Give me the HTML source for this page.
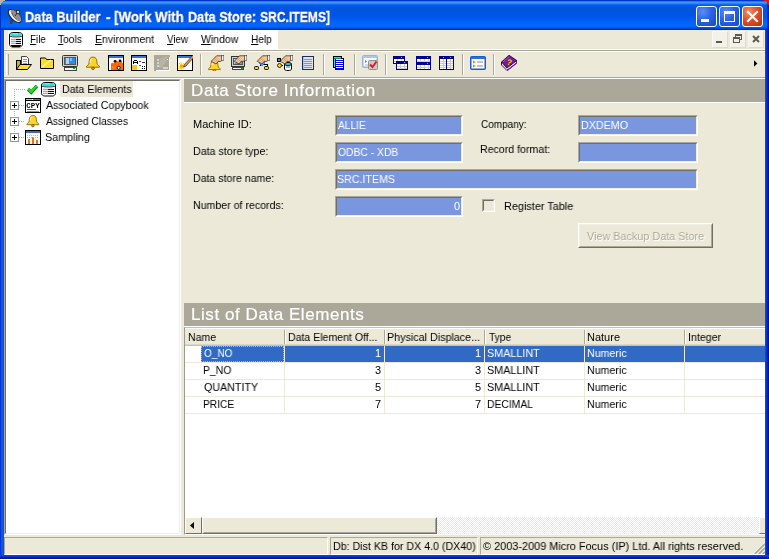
<!DOCTYPE html>
<html>
<head>
<meta charset="utf-8">
<title>Data Builder - [Work With Data Store: SRC.ITEMS]</title>
<style>
html,body{margin:0;padding:0;}
body{width:769px;height:559px;overflow:hidden;background:#ece9d8;font-family:"Liberation Sans",sans-serif;font-size:11px;color:#000;position:relative;}
#win{position:absolute;left:0;top:0;width:769px;height:559px;overflow:hidden;}
#win div,#win svg{position:absolute;box-sizing:border-box;}
.t{will-change:transform;white-space:nowrap;line-height:13px;height:13px;font-size:11px;transform-origin:0 50%;}
.t u{text-decoration:underline;text-underline-offset:1px;}
.tah{font-family:"Liberation Sans",sans-serif;}
.w{color:#fff;}
.ttl{-webkit-text-stroke:0.3px #fff;color:#fff;font-weight:bold;font-size:14px;line-height:17px;height:17px;text-shadow:1px 1px 0 #0f3aa8;}
.hd{-webkit-text-stroke:0.2px #fff;color:#fff;font-size:17px;line-height:19px;height:19px;}
.dis{color:#aca899;text-shadow:1px 1px 0 #fff;}
/* frame */
#title{left:0;top:0;width:769px;height:30px;background:linear-gradient(180deg,#0036c8 0,#0036c8 1px,#2a78ee 1px,#2a78ee 2px,#3f96ff 2px,#3f96ff 3px,#2d84f8 3px,#2d84f8 4px,#1068ec 4px,#1068ec 5px,#065ce2 5px,#0458e0 6.500px,#0055de 8px,#0054e3 14px,#0058eb 18px,#0062f8 21.500px,#0066ff 24px,#0066ff 27px,#0056ea 27px,#0056ea 28px,#0044d4 28px,#0044d4 29px,#0032be 29px,#0032be 30px);}
#frameL{left:0;top:30px;width:4px;height:529px;background:linear-gradient(90deg,#0019cf 0,#0a4be0 1px,#0f5fea 2px,#0055e5 3px,#0050e0 4px);}
#frameR{left:765px;top:30px;width:4px;height:529px;background:linear-gradient(90deg,#0048ea 0,#0048ea 1px,#0034d2 1px,#0034d2 2px,#0022b4 2px,#0022b4 3px,#00128e 3px);}
#frameB{left:0;top:555px;width:769px;height:4px;background:linear-gradient(180deg,#0048ea 0,#0048ea 1px,#0034d2 1px,#0034d2 2px,#0022b4 2px,#0022b4 3px,#00128e 3px);}
.cb{top:6px;width:21px;height:21px;border:1px solid #fff;border-radius:3px;background:radial-gradient(circle at 30% 25%,#5b8ff5 0,#2a62e4 45%,#1747c6 100%);}
#bclose{background:radial-gradient(circle at 30% 25%,#f0906a 0,#dc4f2c 45%,#b9300f 100%);}
.mb{top:31px;width:16px;height:17px;background:#f4f2e8;border:1px solid #f9f8f2;border-right-color:#dedbcb;border-bottom-color:#dedbcb;}
/* menu/toolbar */
#menubg{left:4px;top:30px;width:274px;height:19px;background:#fff;}
.hl{left:4px;width:761px;height:1px;}
.sep{top:54px;width:2px;height:21px;border-left:1px solid #aca899;border-right:1px solid #fff;}
.ic{top:55px;width:16px;height:16px;will-change:transform;}
/* tree */
#tree{left:4px;top:79px;width:177px;height:456px;background:#fff;border:1px solid;border-color:#aca899 #fff #fff #aca899;}
#treein{left:0;top:0;width:175px;height:454px;border:1px solid;border-color:#716f64 #f1efe2 #f1efe2 #716f64;}
.pm{left:10px;width:9px;height:9px;border:1px solid #919b9c;background:#fff;}
.pm:before{content:"";position:absolute;left:1px;top:3px;width:5px;height:1px;background:#000;}
.pm:after{content:"";position:absolute;left:3px;top:1px;width:1px;height:5px;background:#000;}
.dv{width:1px;background-image:linear-gradient(180deg,#aca899 1px,transparent 1px);background-size:1px 2px;}
.dh{height:1px;background-image:linear-gradient(90deg,#aca899 1px,transparent 1px);background-size:2px 1px;}
/* right */
.hdr{left:184px;width:581px;height:24px;background:#aca899;border-bottom:1px solid #fff;}
.fld{background:#7a96df;height:21px;border:1px solid;border-color:#aca899 #fff #fff #aca899;}
.fld:before{content:"";position:absolute;left:0;top:0;right:0;bottom:0;border:1px solid;border-color:#716f64 #f1efe2 #f1efe2 #716f64;}
/* list */
#list{overflow:hidden;left:184px;top:327px;width:581px;height:208px;background:#fff;border-top:1px solid #c2bfb0;border-left:1px solid #9d9a8b;border-bottom:1px solid #fff;}
.hc{top:0;height:18px;width:100px;background:#ece9d8;border-top:1px solid #fff;border-bottom:1px solid #c5c2b2;box-shadow:inset 0 -1px 0 0 #d9d6c6;}
.hd2{top:2px;width:2px;height:14px;border-left:1px solid #aca899;border-right:1px solid #fff;}
.gl{background:#ece9d8;}
.selrow{background:#316ac5;}
/* status */
.sp{top:537px;height:18px;border:1px solid;border-color:#aca899 #fff #fff #aca899;}
</style>
</head>
<body>
<div id="win">
  <div id="title"></div>
  <div style="left:0;top:3px;width:1px;height:27px;background:#0033c8"></div><div style="left:767px;top:3px;width:2px;height:27px;background:linear-gradient(90deg,rgba(0,40,180,.55),rgba(0,20,150,.9))"></div><div id="frameL"></div><div id="frameR"></div><div id="frameB"></div>
  <!-- corners -->
  <svg style="left:0;top:0" width="6" height="6" viewBox="0 0 6 6" shape-rendering="crispEdges"><path d="M0 0h5v1h-2v1h-1v1h-1v2h-1z" fill="#b9b59f"/></svg>
  <svg style="left:763px;top:0" width="6" height="6" viewBox="0 0 6 6" shape-rendering="crispEdges"><path d="M6 0h-5v1h2v1h1v1h1v2h1z" fill="#e81212"/></svg>
  <!-- title icon: satellite dish -->
  <svg style="left:7px;top:7px" width="18" height="18" viewBox="0 0 18 18">
    <path d="M3 12.500h2.500v4.500h-2.500z" fill="#4a3a2a"/>
    <ellipse cx="7.800" cy="9" rx="8.300" ry="4" transform="rotate(45 7.800 9)" fill="#f0f0f0" stroke="#1a1a1a" stroke-width="1"/>
    <ellipse cx="8.800" cy="8" rx="6.800" ry="2.700" transform="rotate(45 8.800 8)" fill="#8e8e8e"/>
    <path d="M8 9L10.500 5.500" stroke="#333" stroke-width="1"/><rect x="9.500" y="3.500" width="3" height="3" fill="#d8d0c0" stroke="#222" stroke-width="0.800"/>
    <path d="M5 6c1 4 4 7 8 8" stroke="#555" stroke-width="0.800" fill="none"/>
  </svg>
  <!-- caption buttons -->
  <div class="cb" style="left:696px"><div style="left:4px;top:12px;width:8px;height:3px;background:#fff"></div></div>
  <div class="cb" style="left:719px"><div style="left:4px;top:4px;width:11px;height:11px;border:1px solid #fff;border-top-width:3px"></div></div>
  <div class="cb" id="bclose" style="left:742px"><svg style="left:3px;top:3px" width="13" height="13" viewBox="0 0 13 13"><path d="M2 2l9 9M11 2l-9 9" stroke="#fff" stroke-width="2.2" stroke-linecap="square"/></svg></div>

  <!-- menu bar -->
  <div id="menubg"></div>
  <div style="left:4px;top:30px;width:20px;height:19px;background:#f1ecd9"></div><div style="left:8px;top:31px;width:16px;height:17px;background:#fff"></div>
  <svg class="ic" style="left:8px;top:32px" width="16" height="16" viewBox="0 0 16 16" shape-rendering="crispEdges"><g shape-rendering="auto"><path d="M1.500 3v9.500c0 1.200 1.500 2.500 3 2.500h7c1.500 0 3-1.300 3-2.500v-9.500c0-1.200-1.500-2.500-3-2.500h-7c-1.500 0-3 1.300-3 2.500z" fill="#fff" stroke="#000"/><path d="M2 2.500c0-.800 1.500-1.500 3-1.500h6c1.500 0 3 .700 3 1.500s-1.500 1.700-3 1.700h-6c-1.500 0-3-.900-3-1.700z" fill="#20e0e0"/><path d="M5 1.800h5" stroke="#a0ffff" stroke-width="0.800"/><path d="M2 4.200c2 1 10 1 12 0" stroke="#000" stroke-width="0.800" fill="none"/></g><path d="M3 7.500h5M3 9.500h5M3 11.500h5" stroke="#aaa"/><path d="M8 7.500h5M8 9.500h5M8 11.500h5" stroke="#111"/><path d="M3 6.500h10M3 8.500h10M3 10.500h10" stroke="#e8e8e8"/><path d="M3 13.500h10M4 14.500h8" stroke="#000"/></svg>
  <div class="mb" style="left:712px"><div style="left:3px;top:9px;width:6px;height:2px;background:#5c5a4f"></div></div>
  <div class="mb" style="left:730px"><div style="left:4px;top:2px;width:7px;height:6px;border:1px solid #5c5a4f;border-top-width:2px"></div><div style="left:2px;top:5px;width:7px;height:6px;border:1px solid #5c5a4f;border-top-width:2px;background:#f4f2e8"></div></div>
  <div class="mb" style="left:748px"><svg style="left:3px;top:3px" width="8" height="8" viewBox="0 0 8 8"><path d="M1 1l6 6M7 1l-6 6" stroke="#5c5a4f" stroke-width="2"/></svg></div>
  <div class="hl" style="top:49px;background:#fff"></div>
  <div class="hl" style="top:50px;background:#aca899"></div>
  <div class="hl" style="top:51px;background:#fff"></div>
  <div class="hl" style="top:77px;background:#aca899"></div>
  <div class="hl" style="top:78px;background:#fff"></div>

  <!-- toolbar -->
  <div style="left:6px;top:54px;width:3px;height:21px;border-left:1px solid #fff;border-right:1px solid #aca899"></div>
  <div class="sep" style="left:200px"></div><div class="sep" style="left:323px"></div><div class="sep" style="left:354px"></div>
  <div class="sep" style="left:385px"></div><div class="sep" style="left:462px"></div><div class="sep" style="left:493px"></div>
  <svg style="left:754px;top:60px" width="4" height="7" viewBox="0 0 4 7"><path d="M0 0.300l3.400 3.200-3.400 3.200z" fill="#000"/></svg>
  <svg class="ic" style="left:16px;top:55px" width="16" height="16" viewBox="0 0 16 16" shape-rendering="crispEdges"><path d="M5.500 1.500h5l2 2v6h-7z" fill="#fff" stroke="#444" shape-rendering="auto"/><path d="M7 4h4M7 6h4M7 8h4" stroke="#999"/><path d="M0.500 5.500h4v9h-4z" fill="#d8b000" stroke="#000"/><path d="M0.500 14.500l3.500-5h11.500l-4 5z" fill="#ffe030" stroke="#000" shape-rendering="auto"/></svg>
<svg class="ic" style="left:39px;top:55px" width="16" height="16" viewBox="0 0 16 16" shape-rendering="crispEdges"><path d="M1.500 4.500v-1.500h5l1 1.500h7v9h-13z" fill="#f8dc28" stroke="#000" shape-rendering="auto"/><path d="M3 12l9-7" stroke="#fff4a0" stroke-width="1.500" shape-rendering="auto"/></svg>
<svg class="ic" style="left:62px;top:55px" width="16" height="16" viewBox="0 0 16 16" shape-rendering="crispEdges"><rect x="0.500" y="0.500" width="15" height="11" rx="1" fill="#d0d0d0" stroke="#333" shape-rendering="auto"/><rect x="2.500" y="2.500" width="11" height="7" fill="#2c8cf0" stroke="#555"/><rect x="4" y="3" width="3" height="6" fill="#a8d4ff"/><rect x="8" y="3" width="2" height="3" fill="#7cc0ff"/><rect x="2" y="12" width="12" height="3" fill="#f4f4f4" stroke="#444" stroke-width="1"/><rect x="11" y="13" width="2" height="1" fill="#00b000"/></svg>
<svg class="ic" style="left:85px;top:55px" width="16" height="16" viewBox="0 0 16 16" shape-rendering="crispEdges"><g transform="translate(0 1.2) scale(1.0 0.88)" shape-rendering="auto"><path d="M8 1c-2.600 0-3.800 2.200-3.800 5 0 3-1.200 4.500-2.700 5.500v1h13v-1c-1.500-1-2.700-2.500-2.700-5.500 0-2.800-1.200-5-3.800-5z" fill="#ffd42a" stroke="#8a6500" stroke-width="1"/><path d="M6.300 3.200c-.9 1-1.100 2.600-1.100 4.200" stroke="#fff6b0" stroke-width="1.200" fill="none"/><circle cx="8" cy="13.800" r="1.400" fill="#e8a800" stroke="#6a4a00" stroke-width="0.800"/></g></svg>
<svg class="ic" style="left:108px;top:55px" width="16" height="16" viewBox="0 0 16 16" shape-rendering="crispEdges"><rect x="0.500" y="0.500" width="15" height="15" fill="#fff" stroke="#000"/><rect x="1" y="1" width="14" height="2" fill="#3f6fd8"/><g shape-rendering="auto"><path d="M3 15v-5.500c0-2 2-2.500 3-1 .2-3.500 3.500-4 4.200-1.200 1-3 4.300-2.500 4 .500l.800.700v6.500z" fill="#f4690e"/><circle cx="7" cy="6.300" r="1.300" fill="#000"/><circle cx="12" cy="5.800" r="1.300" fill="#000"/><circle cx="10.700" cy="12.800" r="1.500" fill="#fff" stroke="#000" stroke-width="0.900"/><path d="M4 12l2 1" stroke="#ffb060" stroke-width="0.800"/></g></svg>
<svg class="ic" style="left:131px;top:55px" width="16" height="16" viewBox="0 0 16 16" shape-rendering="crispEdges"><rect x="0.500" y="0.500" width="15" height="15" fill="#fff" stroke="#000"/><rect x="1" y="1" width="14" height="2" fill="#3f6fd8"/><path d="M2 9v-3h1v-1h3v1h1v3h-1v-1h-3v1z" fill="#000"/><rect x="3" y="6" width="3" height="1" fill="#fff"/><rect x="8" y="6" width="2" height="1" fill="#e00000"/><rect x="11" y="7" width="3" height="1" fill="#333"/><rect x="8" y="10" width="2" height="1" fill="#00a000"/><rect x="1" y="10" width="5" height="5" fill="#f8c818"/><rect x="11" y="11" width="1" height="1" fill="#000"/><rect x="13" y="11" width="1" height="1" fill="#000"/><rect x="11" y="13" width="1" height="1" fill="#000"/><rect x="13" y="13" width="1" height="1" fill="#000"/></svg>
<svg class="ic" style="left:154px;top:55px" width="16" height="16" viewBox="0 0 16 16" shape-rendering="crispEdges"><rect x="0" y="0" width="16" height="16" fill="#aca899"/><path d="M2 15h13v-13" stroke="#fff" fill="none"/><path d="M3 5h2M3 8h2M3 11h3M8 10l6-6M9 13h5" stroke="#fff" shape-rendering="auto"/><path d="M6 4l7-3v5l-5 6-3 1z" fill="#b8b4a4" shape-rendering="auto"/></svg>
<svg class="ic" style="left:177px;top:55px" width="16" height="16" viewBox="0 0 16 16" shape-rendering="crispEdges"><rect x="0.500" y="0.500" width="15" height="15" fill="#fff" stroke="#000"/><rect x="1" y="1" width="14" height="2" fill="#3f6fd8"/><g shape-rendering="auto"><path d="M1 11l7 1M2 8l5 6M4 7l1 8M7 8l-4 6M1 14l7-4" stroke="#ffd000" stroke-width="1"/><circle cx="4.500" cy="11" r="1.500" fill="#ffa000"/><path d="M15.500 0.500l-8 9-1 2.500 2.500-1 8-9z" fill="#d89858" stroke="#5a3010" stroke-width="0.800"/></g></svg>
<svg class="ic" style="left:208px;top:55px" width="16" height="16" viewBox="0 0 16 16" shape-rendering="crispEdges"><g transform="translate(-0.8 4.68) scale(0.9 0.792)" shape-rendering="auto"><path d="M8 1c-2.600 0-3.800 2.200-3.800 5 0 3-1.200 4.500-2.700 5.500v1h13v-1c-1.500-1-2.700-2.500-2.700-5.500 0-2.800-1.200-5-3.800-5z" fill="#ffd42a" stroke="#8a6500" stroke-width="1"/><path d="M6.300 3.200c-.9 1-1.100 2.600-1.100 4.200" stroke="#fff6b0" stroke-width="1.200" fill="none"/><circle cx="8" cy="13.800" r="1.400" fill="#e8a800" stroke="#6a4a00" stroke-width="0.800"/></g><g shape-rendering="auto"><path d="M8.500 0.800h5.500v4.700l-2 1h-2l-2 2.500-4.800-2.700z" fill="#f6c9a0" stroke="#2a1a0a" stroke-width="0.700"/><path d="M8.300 1.800l-4 4M9.300 2.800l-4 4M10.300 3.800l-3.500 3.500M11.300 4.800l-3 3" stroke="#b07840" stroke-width="0.800" stroke-dasharray="1 1"/><rect x="13.800" y="0.600" width="2" height="4.800" fill="#fff" stroke="#222" stroke-width="0.500"/></g></svg>
<svg class="ic" style="left:231px;top:55px" width="16" height="16" viewBox="0 0 16 16" shape-rendering="crispEdges"><rect x="0.500" y="1.500" width="13" height="10" fill="#d0d0d0" stroke="#333"/><rect x="2.500" y="3.500" width="9" height="6" fill="#c0e4ff" stroke="#555"/><path d="M3 9l3-3 2 2 3-2v3z" fill="#4aa8f0" shape-rendering="auto"/><rect x="1.500" y="12.500" width="11" height="2" fill="#f4f4f4" stroke="#444"/><rect x="10" y="13" width="2" height="1" fill="#00b000"/><g shape-rendering="auto"><path d="M8.500 0.800h5.500v4.700l-2 1h-2l-2 2.500-4.800-2.700z" fill="#f6c9a0" stroke="#2a1a0a" stroke-width="0.700"/><path d="M8.300 1.800l-4 4M9.300 2.800l-4 4M10.300 3.800l-3.500 3.500M11.300 4.800l-3 3" stroke="#b07840" stroke-width="0.800" stroke-dasharray="1 1"/><rect x="13.800" y="0.600" width="2" height="4.800" fill="#fff" stroke="#222" stroke-width="0.500"/></g></svg>
<svg class="ic" style="left:254px;top:55px" width="16" height="16" viewBox="0 0 16 16" shape-rendering="crispEdges"><path d="M6 11v-2h7v2" stroke="#000" fill="none"/><rect x="0.500" y="11.500" width="4" height="3" fill="#ffd000" stroke="#000" shape-rendering="auto" rx="1"/><rect x="10.500" y="11.500" width="4" height="3" fill="#ffd000" stroke="#000" shape-rendering="auto" rx="1"/><path d="M8 5l3 3-3 3-3-3z" fill="#60a8f0" stroke="#2060b0" stroke-width="0.600" shape-rendering="auto"/><g shape-rendering="auto"><path d="M8.500 0.800h5.500v4.700l-2 1h-2l-2 2.500-4.800-2.700z" fill="#f6c9a0" stroke="#2a1a0a" stroke-width="0.700"/><path d="M8.300 1.800l-4 4M9.300 2.800l-4 4M10.300 3.800l-3.500 3.500M11.300 4.800l-3 3" stroke="#b07840" stroke-width="0.800" stroke-dasharray="1 1"/><rect x="13.800" y="0.600" width="2" height="4.800" fill="#fff" stroke="#222" stroke-width="0.500"/></g></svg>
<svg class="ic" style="left:277px;top:55px" width="16" height="16" viewBox="0 0 16 16" shape-rendering="crispEdges"><rect x="0.500" y="3.500" width="3" height="3" fill="#3890f0" stroke="#000"/><circle cx="2.500" cy="10.500" r="2" fill="#ffd800" stroke="#000" stroke-width="0.800" shape-rendering="auto"/><path d="M4 5h3M5 10h2" stroke="#000" stroke-dasharray="1 1"/><g shape-rendering="auto"><path d="M7.500 9v5c0 1 1.500 1.500 3.500 1.500s3.500-.500 3.500-1.500v-5z" fill="#fff" stroke="#000"/><ellipse cx="11" cy="9" rx="3.500" ry="1.500" fill="#30d8e0" stroke="#000"/><path d="M9 12h4" stroke="#666"/></g><g shape-rendering="auto"><path d="M8.500 0.800h5.500v4.700l-2 1h-2l-2 2.500-4.800-2.700z" fill="#f6c9a0" stroke="#2a1a0a" stroke-width="0.700"/><path d="M8.300 1.800l-4 4M9.300 2.800l-4 4M10.300 3.800l-3.500 3.500M11.300 4.800l-3 3" stroke="#b07840" stroke-width="0.800" stroke-dasharray="1 1"/><rect x="13.800" y="0.600" width="2" height="4.800" fill="#fff" stroke="#222" stroke-width="0.500"/></g></svg>
<svg class="ic" style="left:300px;top:55px" width="16" height="16" viewBox="0 0 16 16" shape-rendering="crispEdges"><rect x="2.500" y="1.500" width="11" height="13" fill="#dfe3ee" stroke="#1a2a6a"/><path d="M4 4h8M4 6h8M4 8h8M4 10h8M4 12h8" stroke="#8a92b8"/><rect x="3" y="2" width="1" height="12" fill="#b8bed8"/></svg>
<svg class="ic" style="left:331px;top:55px" width="16" height="16" viewBox="0 0 16 16" shape-rendering="crispEdges"><rect x="2.500" y="1.500" width="8" height="11" fill="#30d8e0" stroke="#000"/><rect x="4.500" y="3.500" width="8" height="11" fill="#fff" stroke="#000"/><path d="M5 5h7M5 7h7M5 9h7M5 11h7M5 13h7" stroke="#0000f0"/><path d="M3 3h7" stroke="#0090a0"/></svg>
<svg class="ic" style="left:362px;top:55px" width="16" height="16" viewBox="0 0 16 16" shape-rendering="crispEdges"><g shape-rendering="auto"><rect x="0.750" y="0.750" width="14.500" height="11.500" rx="1.500" fill="#fff" stroke="#8fb4ec" stroke-width="1.500"/><rect x="1" y="1" width="14" height="2" fill="#a8c8f4"/><path d="M3 5l2 1.500-2 1.500z" fill="#4a80d8"/><path d="M3 10h3" stroke="#9ab8e8"/><rect x="6.500" y="5.500" width="9" height="9" rx="1" fill="#c8c8c8" stroke="#909090"/><path d="M8 9.500l2.500 2.500 4-5.500" stroke="#e01818" stroke-width="1.800" fill="none"/></g></svg>
<svg class="ic" style="left:393px;top:55px" width="16" height="16" viewBox="0 0 16 16" shape-rendering="crispEdges"><rect x="0.5" y="1.5" width="11" height="7" fill="#fff" stroke="#000080"/><rect x="0" y="1" width="12" height="3" fill="#000090"/><rect x="8" y="2" width="1" height="1" fill="#00e0ff"/><rect x="1" y="6" width="10" height="1" fill="#c8c8d8"/><rect x="4" y="4" width="1" height="4" fill="#c8c8d8"/><rect x="8" y="4" width="1" height="4" fill="#c8c8d8"/><rect x="3.5" y="6.5" width="11" height="8" fill="#fff" stroke="#000080"/><rect x="3" y="6" width="12" height="3" fill="#000090"/><rect x="11" y="7" width="1" height="1" fill="#00e0ff"/><rect x="4" y="11" width="10" height="1" fill="#c8c8d8"/><rect x="4" y="13" width="10" height="1" fill="#c8c8d8"/><rect x="7" y="9" width="1" height="5" fill="#c8c8d8"/><rect x="11" y="9" width="1" height="5" fill="#c8c8d8"/></svg>
<svg class="ic" style="left:416px;top:55px" width="16" height="16" viewBox="0 0 16 16" shape-rendering="crispEdges"><rect x="0.5" y="1.5" width="14" height="6" fill="#fff" stroke="#000080"/><rect x="0" y="1" width="15" height="3" fill="#000090"/><rect x="11" y="2" width="1" height="1" fill="#00e0ff"/><rect x="1" y="6" width="13" height="1" fill="#c8c8d8"/><rect x="4" y="4" width="1" height="3" fill="#c8c8d8"/><rect x="8" y="4" width="1" height="3" fill="#c8c8d8"/><rect x="12" y="4" width="1" height="3" fill="#c8c8d8"/><rect x="0.5" y="7.5" width="14" height="7" fill="#fff" stroke="#000080"/><rect x="0" y="7" width="15" height="3" fill="#000090"/><rect x="11" y="8" width="1" height="1" fill="#00e0ff"/><rect x="1" y="12" width="13" height="1" fill="#c8c8d8"/><rect x="4" y="10" width="1" height="4" fill="#c8c8d8"/><rect x="8" y="10" width="1" height="4" fill="#c8c8d8"/><rect x="12" y="10" width="1" height="4" fill="#c8c8d8"/></svg>
<svg class="ic" style="left:439px;top:55px" width="16" height="16" viewBox="0 0 16 16" shape-rendering="crispEdges"><rect x="0.5" y="1.5" width="7" height="13" fill="#fff" stroke="#000080"/><rect x="0" y="1" width="8" height="3" fill="#000090"/><rect x="4" y="2" width="1" height="1" fill="#00e0ff"/><rect x="1" y="6" width="6" height="1" fill="#c8c8d8"/><rect x="1" y="8" width="6" height="1" fill="#c8c8d8"/><rect x="1" y="10" width="6" height="1" fill="#c8c8d8"/><rect x="1" y="12" width="6" height="1" fill="#c8c8d8"/><rect x="4" y="4" width="1" height="10" fill="#c8c8d8"/><rect x="7.5" y="1.5" width="7" height="13" fill="#fff" stroke="#000080"/><rect x="7" y="1" width="8" height="3" fill="#000090"/><rect x="11" y="2" width="1" height="1" fill="#00e0ff"/><rect x="8" y="6" width="6" height="1" fill="#c8c8d8"/><rect x="8" y="8" width="6" height="1" fill="#c8c8d8"/><rect x="8" y="10" width="6" height="1" fill="#c8c8d8"/><rect x="8" y="12" width="6" height="1" fill="#c8c8d8"/><rect x="11" y="4" width="1" height="10" fill="#c8c8d8"/></svg>
<svg class="ic" style="left:470px;top:55px" width="16" height="16" viewBox="0 0 16 16" shape-rendering="crispEdges"><g shape-rendering="auto"><rect x="0.750" y="1.750" width="14.500" height="12.500" rx="1" fill="#fff" stroke="#1c5cd0" stroke-width="1.500"/><rect x="1" y="2" width="14" height="2" fill="#2c6cdc"/><path d="M3 5.500l3 1.500-3 1.500zM3 9.500l3 1.500-3 1.500z" fill="#f08010"/><path d="M7 7h6M7 11h6" stroke="#888"/></g></svg>
<svg class="ic" style="left:501px;top:55px" width="16" height="16" viewBox="0 0 16 16"><g shape-rendering="auto"><path d="M0.500 7v3l5.500 5.500 9.700-7.500v-2.500z" fill="#fff" stroke="#1a0030" stroke-width="0.900"/><path d="M1.500 10.500l4.700 4M1.500 9l4.700 4.500" stroke="#8a6aa0" stroke-width="0.500"/><path d="M6 15.500l9.700-7.500" stroke="#7a1aa0" stroke-width="1.300"/><path d="M0.500 7l7.500-6.700 7.700 5.200-9.700 7.500z" fill="#7a1aa0" stroke="#1a0030" stroke-width="0.900"/><path d="M2 7l6-5.400" stroke="#b060d0" stroke-width="0.800"/><text x="6" y="9.800" font-family="Liberation Sans,sans-serif" font-weight="bold" font-size="8" fill="#ffd800" transform="rotate(20 8 7)">?</text></g></svg>

  <!-- tree -->
  <div id="tree"><div id="treein"></div></div>
  <div style="left:60px;top:81px;width:73px;height:16px;background:#ece9d8"></div>
  <div class="dv" style="left:14px;top:89px;height:45px"></div>
  <div class="dh" style="left:14px;top:89px;width:12px"></div>
  <div class="dh" style="left:19px;top:105px;width:6px"></div>
  <div class="dh" style="left:19px;top:121px;width:6px"></div>
  <div class="dh" style="left:19px;top:137px;width:6px"></div>
  <div class="pm" style="top:101px"></div><div class="pm" style="top:117px"></div><div class="pm" style="top:133px"></div>
  <svg class="ic" style="left:25px;top:81px" width="16" height="16" viewBox="0 0 16 16"><path d="M3.200 8.300l3 3 5.600-6.300" stroke="#067a06" stroke-width="3.400" fill="none" shape-rendering="auto"/><path d="M3.200 7.800l3 3 5.600-6.300" stroke="#1fe01f" stroke-width="2.200" fill="none" shape-rendering="auto"/></svg>
<svg class="ic" style="left:41px;top:81px" width="16" height="16" viewBox="0 0 16 16" shape-rendering="crispEdges"><g transform="translate(0 1)"><g shape-rendering="auto"><path d="M0.500 3v8.500c0 1.200 1.500 2.500 3 2.500h8c1.500 0 3-1.300 3-2.500v-8.500c0-1.200-1.500-2.500-3-2.500h-8c-1.500 0-3 1.300-3 2.500z" fill="#fff" stroke="#000"/><path d="M1 2.500c0-.800 1.500-1.500 3-1.500h7c1.500 0 3 .700 3 1.500s-1.500 1.700-3 1.700h-7c-1.500 0-3-.900-3-1.700z" fill="#20e0e0"/><path d="M4 1.800h5" stroke="#a0ffff" stroke-width="0.800"/><path d="M1 4.200c2 1 11 1 13 0" stroke="#000" stroke-width="0.800" fill="none"/></g><path d="M2 7.500h5M2 9.500h5M2 11.500h5" stroke="#aaa"/><path d="M7 7.500h6M7 9.500h6M7 11.500h6" stroke="#111"/><path d="M2 6.500h11M2 8.500h11M2 10.500h11" stroke="#e8e8e8"/></g></svg>
<svg class="ic" style="left:25px;top:97px" width="16" height="16" viewBox="0 0 16 16" shape-rendering="crispEdges"><rect x="0.500" y="1.500" width="15" height="14" fill="#fff" stroke="#000"/><rect x="1" y="2" width="6" height="1" fill="#f8c818"/><rect x="8" y="2" width="7" height="1" fill="#4a78d8"/><rect x="1" y="3" width="14" height="1" fill="#000"/><text x="1.200" y="10.500" font-family="Liberation Mono,monospace" font-weight="bold" font-size="7.500" fill="#000" textLength="13.500" lengthAdjust="spacingAndGlyphs" shape-rendering="auto">CPY</text><rect x="2" y="12" width="9" height="1" fill="#555"/><rect x="2" y="14" width="12" height="1" fill="#999"/></svg>
<svg class="ic" style="left:25px;top:113px" width="16" height="16" viewBox="0 0 16 16" shape-rendering="crispEdges"><g transform="translate(0.5 1.604) scale(0.92 0.8096)" shape-rendering="auto"><path d="M8 1c-2.600 0-3.800 2.200-3.800 5 0 3-1.200 4.500-2.700 5.500v1h13v-1c-1.500-1-2.700-2.500-2.700-5.500 0-2.800-1.200-5-3.800-5z" fill="#ffd42a" stroke="#8a6500" stroke-width="1"/><path d="M6.300 3.200c-.9 1-1.100 2.600-1.100 4.200" stroke="#fff6b0" stroke-width="1.200" fill="none"/><circle cx="8" cy="13.800" r="1.400" fill="#e8a800" stroke="#6a4a00" stroke-width="0.800"/></g></svg>
<svg class="ic" style="left:25px;top:129px" width="16" height="16" viewBox="0 0 16 16" shape-rendering="crispEdges"><rect x="0.500" y="1.500" width="15" height="14" fill="#fff" stroke="#000"/><rect x="1" y="2" width="14" height="2" fill="#3a68c8"/><rect x="3" y="10" width="2" height="5" fill="#f07010"/><rect x="7" y="8" width="2" height="7" fill="#f07010"/><rect x="11" y="11" width="2" height="4" fill="#f07010"/><path d="M2 6h12M2 8h12" stroke="#bbb" stroke-dasharray="1 1"/></svg>

  <!-- headers -->
  <div class="hdr" style="top:79px"></div>
  <div class="hdr" style="top:303px"></div>

  <!-- fields -->
  <div class="fld" style="left:335px;top:115px;width:128px"></div>
  <div class="fld" style="left:335px;top:142px;width:128px"></div>
  <div class="fld" style="left:335px;top:169px;width:363px"></div>
  <div class="fld" style="left:335px;top:196px;width:128px"></div>
  <div class="fld" style="left:578px;top:115px;width:120px"></div>
  <div class="fld" style="left:578px;top:142px;width:120px"></div>
  <div class="fld" style="left:482px;top:199px;width:13px;height:13px;background:#ece9d8"></div>
  <!-- button -->
  <div style="left:578px;top:223px;width:135px;height:25px;background:#ece9d8;border:1px solid;border-color:#fff #716f64 #716f64 #fff"><div style="left:0;top:0;right:0;bottom:0;border:1px solid;border-color:#f1efe2 #aca899 #aca899 #f1efe2"></div></div>

  <!-- list -->
  <div id="list">
    <div class="hc" style="left:0;width:580px"></div>
    <div class="hd2" style="left:99px"></div><div class="hd2" style="left:199px"></div><div class="hd2" style="left:299px"></div><div class="hd2" style="left:399px"></div><div class="hd2" style="left:499px"></div>
    <!-- selection -->
    <div class="selrow" style="left:16px;top:18px;width:83px;height:16px;outline:1px dotted #e0b070;outline-offset:-1px"></div>
    <div class="selrow" style="left:100px;top:18px;width:99px;height:16px"></div>
    <div class="selrow" style="left:200px;top:18px;width:99px;height:16px"></div>
    <div class="selrow" style="left:300px;top:18px;width:99px;height:16px"></div>
    <div class="selrow" style="left:400px;top:18px;width:99px;height:16px"></div>
    <div class="selrow" style="left:500px;top:18px;width:80px;height:16px"></div>
    <!-- grid lines -->
    <div class="gl" style="left:0;top:34px;width:580px;height:1px"></div>
    <div class="gl" style="left:0;top:51px;width:580px;height:1px"></div>
    <div class="gl" style="left:0;top:68px;width:580px;height:1px"></div>
    <div class="gl" style="left:0;top:85px;width:580px;height:1px"></div>
    <div class="gl" style="left:99px;top:18px;width:1px;height:68px"></div>
    <div class="gl" style="left:199px;top:18px;width:1px;height:68px"></div>
    <div class="gl" style="left:299px;top:18px;width:1px;height:68px"></div>
    <div class="gl" style="left:399px;top:18px;width:1px;height:68px"></div>
    <div class="gl" style="left:499px;top:18px;width:1px;height:68px"></div>
    <!-- scrollbar -->
    <div style="left:0;top:189px;width:580px;height:17px;background:#f6f4ec;background-image:conic-gradient(#ece9d8 25%,#fff 0 50%,#ece9d8 0 75%,#fff 0);background-size:2px 2px"></div>
    <div style="left:0;top:189px;width:17px;height:17px;background:#ece9d8;border:1px solid;border-color:#fff #716f64 #716f64 #fff"><svg style="left:4px;top:4px" width="4" height="7" viewBox="0 0 4 7"><path d="M4 0l-4 3.500 4 3.500z" fill="#000"/></svg></div>
    <div style="left:17px;top:189px;width:235px;height:17px;background:#ece9d8;border:1px solid;border-color:#fff #716f64 #716f64 #fff"><div style="left:0;top:0;right:0;bottom:0;border:1px solid;border-color:#ece9d8 #aca899 #aca899 #ece9d8"></div></div>
    <div style="left:574px;top:189px;width:17px;height:17px;background:#ece9d8;border:1px solid;border-color:#fff #716f64 #716f64 #fff"></div>
  </div>

  <!-- status bar -->
  <div class="hl" style="top:535px;background:#ece9d8"></div>
  <div class="sp" style="left:4px;width:324px"></div>
  <div class="sp" style="left:330px;width:148px"></div>
  <div class="sp" style="left:480px;width:285px;border-right:0"></div>
  <svg style="left:752px;top:541px" width="13" height="13" viewBox="0 0 13 13">
    <path d="M13 1.500L1.500 13M13 5.500L5.500 13M13 9.500L9.500 13" stroke="#fff" stroke-width="1.200"/>
    <path d="M13 2.800L2.800 13M13 6.800L6.800 13M13 10.800L10.800 13" stroke="#aca899" stroke-width="1.800"/>
  </svg>

<div id="tt1" class="t ttl" style="left:25.00px;top:9px;transform:scaleX(0.9152);">Data Builder</div>
<div id="tt3" class="t ttl" style="left:106.00px;top:9px;transform:scaleX(0.9472);">- [Work With</div>
<div id="tt4" class="t ttl" style="left:188.00px;top:9px;transform:scaleX(0.9110);">Data Store:</div>
<div id="tt5" class="t ttl" style="left:260.20px;top:9px;transform:scaleX(0.8651);">SRC.ITEMS]</div>
<div id="m1" class="t tah" style="left:30.00px;top:33px;transform:scaleX(0.8941);"><u>F</u>ile</div>
<div id="m2" class="t tah" style="left:58.00px;top:33px;transform:scaleX(0.9293);"><u>T</u>ools</div>
<div id="m3" class="t tah" style="left:95.00px;top:33px;transform:scaleX(0.9565);"><u>E</u>nvironment</div>
<div id="m4" class="t tah" style="left:167.00px;top:33px;transform:scaleX(0.8875);"><u>V</u>iew</div>
<div id="m5" class="t tah" style="left:201.00px;top:33px;transform:scaleX(0.9538);"><u>W</u>indow</div>
<div id="m6" class="t tah" style="left:251.00px;top:33px;transform:scaleX(0.9182);"><u>H</u>elp</div>
<div id="tr0" class="t" style="left:62.00px;top:83px;transform:scaleX(0.9638);">Data Elements</div>
<div id="tr1" class="t" style="left:46.00px;top:99px;transform:scaleX(0.9646);">Associated Copybook</div>
<div id="tr2" class="t" style="left:46.00px;top:115px;transform:scaleX(0.9380);">Assigned Classes</div>
<div id="tr3" class="t" style="left:45.00px;top:131px;transform:scaleX(0.9795);">Sampling</div>
<div id="h1" class="t hd" style="left:191.00px;top:81px;letter-spacing:0.626px;">Data Store Information</div>
<div id="h2" class="t hd" style="left:191.00px;top:305px;letter-spacing:0.558px;">List of Data Elements</div>
<div id="l1" class="t" style="left:192.50px;top:118px;transform:scaleX(0.9931);">Machine ID:</div>
<div id="l2" class="t" style="left:192.50px;top:145px;transform:scaleX(0.9710);">Data store type:</div>
<div id="l3" class="t" style="left:192.50px;top:172px;transform:scaleX(0.9621);">Data store name:</div>
<div id="l4" class="t" style="left:192.50px;top:199px;transform:scaleX(0.9639);">Number of records:</div>
<div id="l5" class="t" style="left:481.00px;top:118px;transform:scaleX(0.9084);">Company:</div>
<div id="l6" class="t" style="left:480.00px;top:143px;transform:scaleX(0.9638);">Record format:</div>
<div id="l7" class="t" style="left:504.00px;top:200px;transform:scaleX(0.9888);">Register Table</div>
<div id="f1" class="t w" style="left:337.50px;top:119px;transform:scaleX(0.9223);">ALLIE</div>
<div id="f2" class="t w" style="left:337.50px;top:146px;transform:scaleX(0.9400);">ODBC - XDB</div>
<div id="f3" class="t w" style="left:336.50px;top:173px;transform:scaleX(0.9693);">SRC.ITEMS</div>
<div id="f4" class="t w" style="left:454.00px;top:200px;">0</div>
<div id="f5" class="t w" style="left:580.60px;top:119px;transform:scaleX(0.9754);">DXDEMO</div>
<div id="b1" class="t dis" style="left:587.00px;top:230px;transform:scaleX(0.9835);">View Backup Data Store</div>
<div id="c1" class="t" style="left:187.80px;top:331px;transform:scaleX(0.9599);">Name</div>
<div id="c2" class="t" style="left:288.00px;top:331px;transform:scaleX(0.9588);">Data Element Off...</div>
<div id="c3" class="t" style="left:386.50px;top:331px;transform:scaleX(0.9762);">Physical Displace...</div>
<div id="c4" class="t" style="left:489.30px;top:331px;transform:scaleX(0.9321);">Type</div>
<div id="c5" class="t" style="left:586.50px;top:331px;transform:scaleX(1.0000);">Nature</div>
<div id="c6" class="t" style="left:687.60px;top:331px;transform:scaleX(0.9703);">Integer</div>
<div id="r0a" class="t w" style="left:204.00px;top:347px;transform:scaleX(0.9129);">O_NO</div>
<div id="r0b" class="t w" style="left:375.00px;top:347px;">1</div>
<div id="r0c" class="t w" style="left:475.00px;top:347px;">1</div>
<div id="r0d" class="t w" style="left:486.60px;top:347px;transform:scaleX(0.9804);">SMALLINT</div>
<div id="r0e" class="t w" style="left:586.70px;top:347px;transform:scaleX(0.9683);">Numeric</div>
<div id="r1a" class="t" style="left:203.00px;top:364px;transform:scaleX(0.9445);">P_NO</div>
<div id="r1b" class="t" style="left:375.00px;top:364px;">3</div>
<div id="r1c" class="t" style="left:475.00px;top:364px;">3</div>
<div id="r1d" class="t" style="left:486.60px;top:364px;transform:scaleX(0.9808);">SMALLINT</div>
<div id="r1e" class="t" style="left:586.70px;top:364px;transform:scaleX(0.9683);">Numeric</div>
<div id="r2a" class="t" style="left:204.00px;top:381px;transform:scaleX(0.9725);">QUANTITY</div>
<div id="r2b" class="t" style="left:375.00px;top:381px;">5</div>
<div id="r2c" class="t" style="left:475.00px;top:381px;">5</div>
<div id="r2d" class="t" style="left:486.60px;top:381px;transform:scaleX(0.9808);">SMALLINT</div>
<div id="r2e" class="t" style="left:586.70px;top:381px;transform:scaleX(0.9683);">Numeric</div>
<div id="r3a" class="t" style="left:203.00px;top:398px;transform:scaleX(0.9293);">PRICE</div>
<div id="r3b" class="t" style="left:375.00px;top:398px;">7</div>
<div id="r3c" class="t" style="left:475.00px;top:398px;">7</div>
<div id="r3d" class="t" style="left:486.60px;top:398px;transform:scaleX(0.9414);">DECIMAL</div>
<div id="r3e" class="t" style="left:586.70px;top:398px;transform:scaleX(0.9683);">Numeric</div>
<div id="s1" class="t tah" style="left:332.50px;top:540px;transform:scaleX(0.9684);">Db: Dist KB for DX 4.0 (DX40)</div>
<div id="s2" class="t tah" style="left:483.00px;top:540px;transform:scaleX(0.9913);">© 2003-2009 Micro Focus (IP) Ltd. All rights reserved.</div>
</div>
</body>
</html>
